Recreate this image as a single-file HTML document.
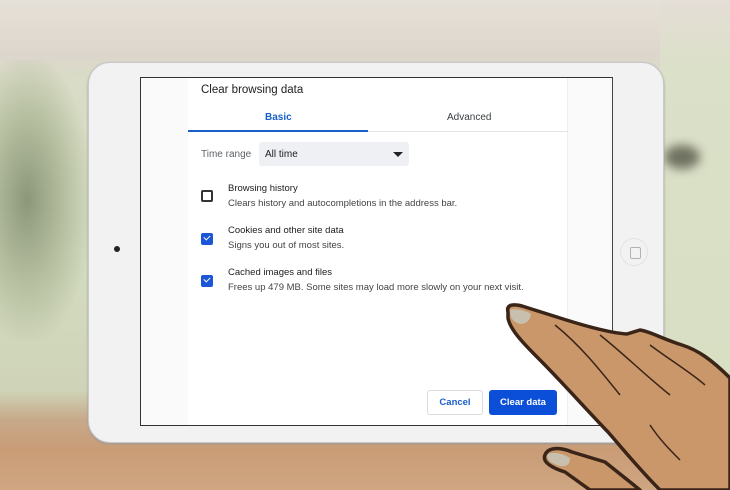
<!DOCTYPE html>
<html><head><style>
*{margin:0;padding:0;box-sizing:border-box}
body{width:730px;height:490px;overflow:hidden;position:relative;font-family:"Liberation Sans",sans-serif;
background:linear-gradient(180deg,#e6e1d8 0px,#ddd6cc 55px,#d9dcc6 80px,#d4dcc0 250px,#cfd4b8 390px,#c7a98a 420px,#c99c76 450px,#cfa682 490px);}
.bg1{position:absolute;left:0;top:60px;width:90px;height:280px;background:radial-gradient(ellipse at 30% 50%,#8c977a 0,#b4bd9e 40%,rgba(210,218,190,0) 75%)}
.bg2{position:absolute;left:660px;top:0;width:70px;height:490px;background:linear-gradient(180deg,#e4ded6 0,#dbe0c8 70px,#d8dfc3 370px,#c9a17c 425px,#cfa37d 490px)}
.blob{position:absolute;left:664px;top:145px;width:36px;height:24px;border-radius:50%;background:#6f7260;filter:blur(5px)}
.tab{position:absolute;left:88px;top:62px;width:576px;height:381px;background:#f2f2f2;border-radius:22px;border:1px solid #c9c9c9;box-shadow:0 1px 2px #999}
.cam{position:absolute;left:114px;top:246px;width:6px;height:6px;border-radius:50%;background:#222}
.home{position:absolute;left:620px;top:238px;width:28px;height:28px;border-radius:50%;border:1px solid #e2e2e2}
.home:after{content:"";position:absolute;left:9px;top:8px;width:9px;height:10px;border:1px solid #b9b0ac;border-radius:2px}
.scr{position:absolute;left:140px;top:77px;width:473px;height:349px;background:#fafafa;border:1px solid #333;border-right:1px solid #444}
.dlg{position:absolute;left:188px;top:78px;width:380px;height:347px;background:#fff;border-right:1px solid #eee}
.t{position:absolute;color:#202124;font-size:11px;white-space:nowrap}
.g{color:#5f6368}
.cb{position:absolute;width:12px;height:12px;border-radius:2px;background:#1a56d6}
.cb:after{content:"";position:absolute;left:3px;top:2px;width:5px;height:3px;border-left:1.5px solid #fff;border-bottom:1.5px solid #fff;transform:rotate(-45deg)}
</style></head><body>
<div class="bg1"></div><div class="bg2"></div><div class="blob"></div>
<div class="tab"></div>
<div class="cam"></div><div class="home"></div>
<div class="scr"></div>
<div class="dlg">
<div class="t" style="left:13px;top:6px;font-size:11.5px">Clear browsing data</div>
<div class="t" style="left:77px;top:34px;color:#1a5fc8;font-weight:bold;font-size:10px">Basic</div>
<div class="t" style="left:259px;top:34px;color:#3c4043;font-size:10px">Advanced</div>
<div style="position:absolute;left:0;top:53px;width:380px;height:1px;background:#e4e4e4"></div>
<div style="position:absolute;left:0;top:52px;width:180px;height:2px;background:#1a5fc8"></div>
<div class="t g" style="left:13px;top:71px;font-size:10px">Time range</div>
<div style="position:absolute;left:71px;top:64px;width:150px;height:24px;background:#eef0f3;border-radius:3px"></div>
<div class="t" style="left:77px;top:71px;font-size:10px">All time</div>
<div style="position:absolute;left:205px;top:74px;border-left:5px solid transparent;border-right:5px solid transparent;border-top:5px solid #202124"></div>
<div style="position:absolute;left:13px;top:112px;width:12px;height:12px;border:2px solid #333;border-radius:2px"></div>
<div class="t" style="left:40px;top:105px;font-size:9.5px">Browsing history</div>
<div class="t" style="left:40px;top:120px;font-size:9.5px;color:#444">Clears history and autocompletions in the address bar.</div>
<div class="cb" style="left:13px;top:155px"></div>
<div class="t" style="left:40px;top:147px;font-size:9.5px">Cookies and other site data</div>
<div class="t" style="left:40px;top:162px;font-size:9.5px;color:#444">Signs you out of most sites.</div>
<div class="cb" style="left:13px;top:197px"></div>
<div class="t" style="left:40px;top:189px;font-size:9.5px">Cached images and files</div>
<div class="t" style="left:40px;top:204px;font-size:9.5px;color:#444">Frees up 479 MB. Some sites may load more slowly on your next visit.</div>
<div style="position:absolute;left:239px;top:312px;width:56px;height:25px;border:1px solid #dadce0;border-radius:3px;color:#1a5fc8;font-size:9.5px;font-weight:bold;text-align:center;line-height:23px">Cancel</div>
<div style="position:absolute;left:301px;top:312px;width:68px;height:25px;background:#0b4fd9;border-radius:3px;color:#fff;font-size:9.5px;font-weight:bold;text-align:center;line-height:25px">Clear data</div>
</div>
<svg style="position:absolute;left:0;top:0" width="730" height="490" viewBox="0 0 730 490">
<g fill="#c9976a" stroke="#3a2418" stroke-width="3.5" stroke-linejoin="round">
<path d="M545 455 C548 447 560 447 572 452 L605 462 L640 490 L590 490 L565 472 C552 468 542 462 545 455 Z"/>
<path d="M508 312 C506 304 514 304 522 306 L560 318 C585 326 610 333 627 334 L640 330 C652 332 660 338 682 345 C698 350 712 360 730 378 L730 490 L660 490 C640 470 622 448 608 432 C585 408 560 380 540 360 C525 345 510 330 508 318 Z"/>
</g>
<path d="M510 310 C515 308 525 310 531 314 C530 320 527 324 520 324 C513 322 510 318 510 310Z" fill="#c9bfae"/>
<path d="M547 455 C552 451 562 453 570 458 C570 465 566 467 560 466 C552 464 547 460 547 455Z" fill="#c9bfae"/>
<g stroke="#3a2418" stroke-width="1.5" fill="none">
<path d="M555 325 C580 345 600 370 620 395"/>
<path d="M600 335 C625 355 645 375 670 395"/>
<path d="M650 345 C670 360 690 372 705 385"/>
<path d="M650 425 C660 440 670 450 680 460"/>
</g>
</svg>
</body></html>
